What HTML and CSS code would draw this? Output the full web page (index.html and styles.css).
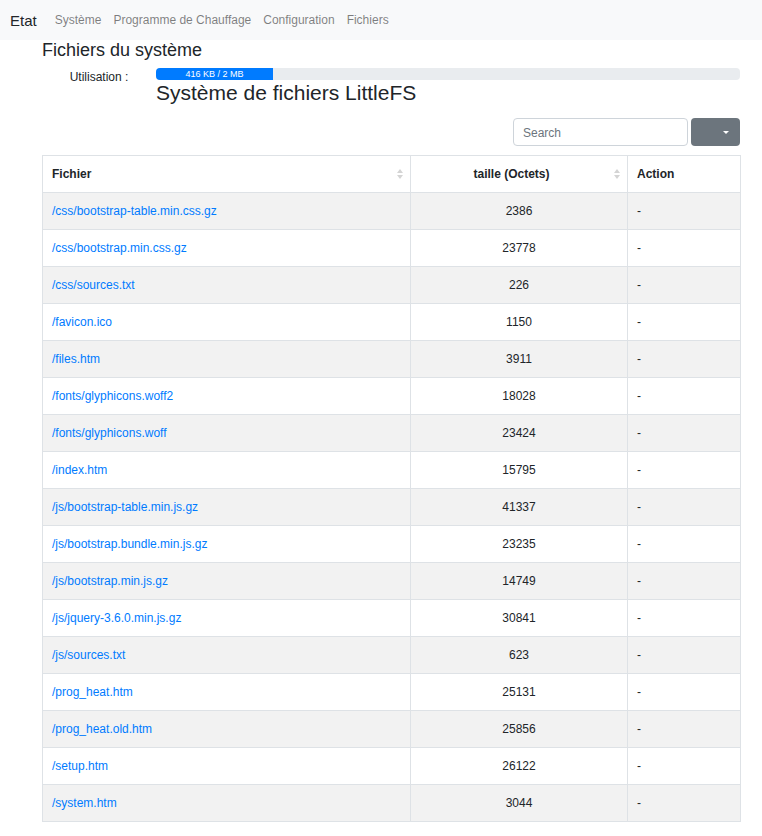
FILE: index.html
```html
<!DOCTYPE html>
<html lang="fr">
<head>
<meta charset="utf-8">
<title>Fichiers</title>
<link rel="stylesheet" href="styles.css">
</head>
<body>
<nav class="navbar">
  <a class="brand" href="#">Etat</a>
  <a class="nav-link" href="#">Système</a>
  <a class="nav-link" href="#">Programme de Chauffage</a>
  <a class="nav-link" href="#">Configuration</a>
  <a class="nav-link" href="#">Fichiers</a>
</nav>
<main class="container">
  <h5 class="title">Fichiers du système</h5>
  <div class="usage">
    <div class="usage-label">Utilisation :</div>
    <div class="usage-main">
      <div class="progress"><div class="progress-bar" style="width:20%">416 KB / 2 MB</div></div>
      <h4 class="fs-title">Système de fichiers LittleFS</h4>
    </div>
  </div>
  <div class="toolbar">
    <input class="search" type="text" placeholder="Search">
    <button class="btn-drop" type="button"><span class="caret"></span></button>
  </div>
  <table class="table">
    <thead>
      <tr>
        <th class="col-file sortable">Fichier<svg class="sort" viewBox="0 0 6 10" width="6" height="10"><path d="M3 0L6 4H0z M3 10L0 6H6z" fill="#d4d4d4"/></svg></th>
        <th class="col-size sortable center">taille (Octets)<svg class="sort" viewBox="0 0 6 10" width="6" height="10"><path d="M3 0L6 4H0z M3 10L0 6H6z" fill="#d4d4d4"/></svg></th>
        <th class="col-action">Action</th>
      </tr>
    </thead>
    <tbody>
      <tr><td><a href="#">/css/bootstrap-table.min.css.gz</a></td><td class="center">2386</td><td>-</td></tr>
      <tr><td><a href="#">/css/bootstrap.min.css.gz</a></td><td class="center">23778</td><td>-</td></tr>
      <tr><td><a href="#">/css/sources.txt</a></td><td class="center">226</td><td>-</td></tr>
      <tr><td><a href="#">/favicon.ico</a></td><td class="center">1150</td><td>-</td></tr>
      <tr><td><a href="#">/files.htm</a></td><td class="center">3911</td><td>-</td></tr>
      <tr><td><a href="#">/fonts/glyphicons.woff2</a></td><td class="center">18028</td><td>-</td></tr>
      <tr><td><a href="#">/fonts/glyphicons.woff</a></td><td class="center">23424</td><td>-</td></tr>
      <tr><td><a href="#">/index.htm</a></td><td class="center">15795</td><td>-</td></tr>
      <tr><td><a href="#">/js/bootstrap-table.min.js.gz</a></td><td class="center">41337</td><td>-</td></tr>
      <tr><td><a href="#">/js/bootstrap.bundle.min.js.gz</a></td><td class="center">23235</td><td>-</td></tr>
      <tr><td><a href="#">/js/bootstrap.min.js.gz</a></td><td class="center">14749</td><td>-</td></tr>
      <tr><td><a href="#">/js/jquery-3.6.0.min.js.gz</a></td><td class="center">30841</td><td>-</td></tr>
      <tr><td><a href="#">/js/sources.txt</a></td><td class="center">623</td><td>-</td></tr>
      <tr><td><a href="#">/prog_heat.htm</a></td><td class="center">25131</td><td>-</td></tr>
      <tr><td><a href="#">/prog_heat.old.htm</a></td><td class="center">25856</td><td>-</td></tr>
      <tr><td><a href="#">/setup.htm</a></td><td class="center">26122</td><td>-</td></tr>
      <tr><td><a href="#">/system.htm</a></td><td class="center">3044</td><td>-</td></tr>
    </tbody>
  </table>
</main>
</body>
</html>
```

FILE: styles.css
```css
* { box-sizing: border-box; }
body {
  margin: 0;
  font-family: "Liberation Sans", Arial, sans-serif;
  font-size: 12px;
  line-height: 18px;
  color: #212529;
  background: #fff;
}
a { color: #007bff; text-decoration: none; }

.navbar {
  height: 40px;
  background: #f8f9fa;
  display: flex;
  align-items: center;
  padding: 0 10px;
}
.brand {
  color: #212529;
  font-size: 15px;
  line-height: 20px;
  margin-right: 12px;
  padding-top: 1px;
}
.nav-link {
  color: rgba(0,0,0,.5);
  font-size: 12px;
  line-height: 18px;
  padding: 0 6px;
}

.container {
  width: 740px;
  padding-left: 42px;
}
.title {
  margin: 2px 0 0;
  font-size: 18px;
  line-height: 17px;
  font-weight: 400;
}
.usage {
  display: flex;
  margin-top: 9px;
}
.usage-label {
  width: 114px;
  text-align: center;
  line-height: 18px;
}
.usage-main { flex: 1; }
.progress {
  height: 12px;
  background: #e9ecef;
  border-radius: 4px;
  overflow: hidden;
  display: flex;
}
.progress-bar {
  background: #007bff;
  color: #fff;
  font-size: 9px;
  line-height: 12px;
  text-align: center;
  white-space: nowrap;
}
.fs-title {
  margin: 1px 0 0;
  font-size: 21px;
  line-height: 24px;
  font-weight: 400;
}

.toolbar {
  display: flex;
  justify-content: flex-end;
  gap: 3px;
  margin-top: 13px;
}
.search {
  width: 175px;
  height: 28px;
  border: 1px solid #ced4da;
  border-radius: 4px;
  padding: 2px 9px 0;
  font-family: inherit;
  font-size: 12px;
  color: #495057;
  background: #fff;
}
.search::placeholder { color: #6c757d; opacity: 1; }
.btn-drop {
  width: 49px;
  height: 28px;
  border: 0;
  border-radius: 4px;
  background: #6c757d;
  display: flex;
  align-items: center;
  justify-content: flex-end;
  padding: 0 11px 0 0;
}
.caret {
  width: 0;
  height: 0;
  border-left: 3px solid transparent;
  border-right: 3px solid transparent;
  border-top: 3px solid #fff;
}

.table {
  width: 698px;
  margin-top: 9px;
  border-collapse: collapse;
  table-layout: fixed;
}
.table th, .table td {
  border: 1px solid #dee2e6;
  padding: 9px 9px;
  line-height: 18px;
  text-align: left;
  vertical-align: middle;
}
.table th {
  font-weight: 700;
  position: relative;
}
.table .center { text-align: center; }
.table th.sortable { padding-right: 30px; }
.table th.col-size { padding-right: 24px; }
.col-file { width: 368px; }
.col-size { width: 217px; }
.col-action { width: 113px; }
.sort {
  position: absolute;
  right: 7px;
  top: 50%;
  margin-top: -5px;
}
.table tbody tr:nth-child(odd) { background: #f2f2f2; }
```
